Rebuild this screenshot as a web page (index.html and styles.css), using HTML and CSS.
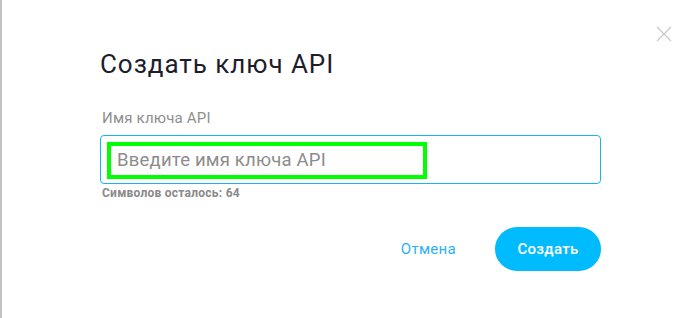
FILE: index.html
```html
<!DOCTYPE html>
<html lang="ru">
<head>
<meta charset="utf-8">
<link rel="stylesheet" href="styles.css">
</head>
<body>
<div class="page">
  <div class="edge"></div>
  <div class="modal">
    <button class="close" aria-label="Закрыть">
      <svg width="16" height="16" viewBox="0 0 16 16"><path d="M1 1L15 15M15 1L1 15" stroke="#c8c8c8" stroke-width="1.2" fill="none"/></svg>
    </button>
    <h1 class="title">Создать ключ API</h1>
    <label class="label" for="key">Имя ключа API</label>
    <div class="field">
      <input id="key" class="input" type="text" placeholder="Введите имя ключа API">
      <span class="highlight"></span>
    </div>
    <div class="hint">Символов осталось: 64</div>
    <div class="actions">
      <button class="btn-cancel">Отмена</button>
      <button class="btn-create">Создать</button>
    </div>
  </div>
</div>
</body>
</html>
```
FILE: styles.css
```css
html, body {
  margin: 0;
  padding: 0;
  background: #fff;
  font-family: Roboto, "Noto Sans", sans-serif;
}
.page {
  display: flex;
  height: 318px;
  overflow: hidden;
}
.edge {
  width: 2px;
  background: #c2c2c2;
  flex: none;
}
.modal {
  position: relative;
  flex: 1;
  padding: 0 0 0 98px;
  display: flex;
  flex-direction: column;
  align-items: flex-start;
}
.close {
  position: absolute;
  top: 26px;
  right: 25px;
  width: 16px;
  height: 16px;
  padding: 0;
  border: 0;
  background: none;
}
.close svg { display: block; }
.title {
  margin: 48px 0 0 0;
  font-size: 26px;
  line-height: 32px;
  font-weight: 400;
  color: #1d1d2b;
  letter-spacing: 0.95px;
}
.label {
  margin-top: 30px;
  padding-left: 2px;
  font-size: 15px;
  line-height: 16px;
  color: #8e8e8e;
  letter-spacing: 0.2px;
}
.field {
  position: relative;
  margin-top: 9px;
  width: 501px;
}
.input {
  display: block;
  box-sizing: border-box;
  width: 501px;
  height: 49px;
  border: 1px solid #17b4ef;
  border-radius: 4px;
  padding: 0 0 0 16px;
  font-family: Roboto, "Noto Sans", sans-serif;
  font-size: 18.5px;
  letter-spacing: 0.2px;
  color: #333;
  outline: none;
}
.input::placeholder { color: #8c8c8c; }
.highlight {
  position: absolute;
  left: 7px;
  top: 7px;
  width: 320px;
  height: 37px;
  box-sizing: border-box;
  border: 4px solid #00ff00;
  pointer-events: none;
}
.hint {
  margin-top: 3px;
  padding-left: 2px;
  font-size: 12px;
  line-height: 13px;
  font-weight: 700;
  color: #8a8a8a;
  letter-spacing: 0.25px;
}
.actions {
  width: 501px;
  display: flex;
  justify-content: flex-end;
  align-items: center;
  gap: 39px;
  margin-top: 27px;
}
.btn-cancel {
  border: 0;
  background: none;
  padding: 0;
  font-family: Roboto, "Noto Sans", sans-serif;
  font-size: 15px;
  letter-spacing: 0.3px;
  color: #2bb3f5;
}
.btn-create {
  border: 0;
  width: 106px;
  height: 44px;
  border-radius: 22px;
  background: #00bcff;
  color: #fff;
  font-family: Roboto, "Noto Sans", sans-serif;
  font-size: 15px;
  letter-spacing: 0.3px;
  font-weight: 500;
}
```
